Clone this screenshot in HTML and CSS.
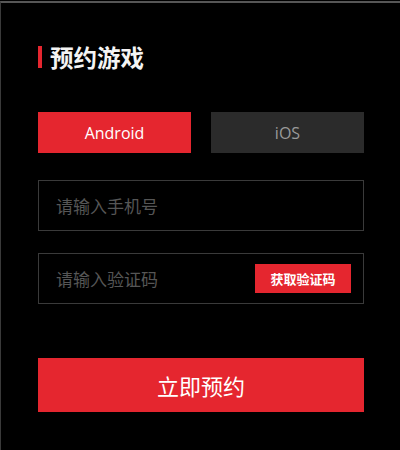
FILE: index.html
```html
<!DOCTYPE html>
<html lang="zh-CN">
<head>
<meta charset="utf-8">
<title>预约游戏</title>
<link rel="stylesheet" href="styles.css">
</head>
<body>
<div class="frame">
  <h2 class="title">预约游戏</h2>
  <div class="platforms">
    <button class="platform active" type="button">Android</button>
    <button class="platform" type="button">iOS</button>
  </div>
  <div class="field">
    <input class="input" type="text" placeholder="请输入手机号">
  </div>
  <div class="field field-code">
    <input class="input" type="text" placeholder="请输入验证码">
    <button class="code-btn" type="button">获取验证码</button>
  </div>
  <button class="submit" type="button">立即预约</button>
</div>
</body>
</html>
```
FILE: styles.css
```css
html, body {
  margin: 0;
  padding: 0;
  background: #000;
}
body {
  padding-top: 1px;
  font-family: "Open Sans", "Noto Sans CJK SC", sans-serif;
}
.frame {
  box-sizing: border-box;
  width: 400px;
  height: 449px;
  border-top: 2px solid #565656;
  border-left: 1px solid #3a3a3a;
  padding: 43px 36px 0 37px;
}
.title {
  margin: 0;
  height: 22px;
  line-height: 22px;
  border-left: 4px solid #e5262f;
  padding-left: 8px;
  color: #f4f4f4;
  font-family: "Noto Sans CJK SC", sans-serif;
  font-size: 23.5px;
  font-weight: 700;
}
.platforms {
  margin-top: 44px;
  display: flex;
  gap: 20px;
}
.platform {
  flex: 1;
  height: 41px;
  border: 0;
  margin: 0;
  padding: 0;
  background: #2b2b2b;
  color: #9a9a9a;
  font-family: "Open Sans", sans-serif;
  font-size: 16px;
}
.platform.active {
  background: #e5262f;
  color: #fff;
}
.field {
  margin-top: 27px;
  height: 51px;
  box-sizing: border-box;
  border: 1px solid #3a3a3a;
  display: flex;
  align-items: center;
  padding: 0 12px 0 17px;
}
.field-code {
  margin-top: 22px;
}
.input {
  flex: 1;
  min-width: 0;
  background: transparent;
  border: 0;
  outline: none;
  padding: 0;
  color: #ddd;
  font-family: "Noto Sans CJK SC", sans-serif;
  font-size: 17px;
}
.input::placeholder {
  color: #565656;
}
.code-btn {
  width: 96px;
  height: 29px;
  border: 0;
  padding: 0;
  background: #e5262f;
  color: #fff;
  font-family: "Noto Sans CJK SC", sans-serif;
  font-size: 13px;
  font-weight: 700;
}
.submit {
  display: block;
  margin-top: 54px;
  width: 100%;
  height: 54px;
  border: 0;
  padding: 0;
  background: #e5262f;
  color: #fff;
  font-family: "Noto Sans CJK SC", sans-serif;
  font-size: 22px;
}
```
